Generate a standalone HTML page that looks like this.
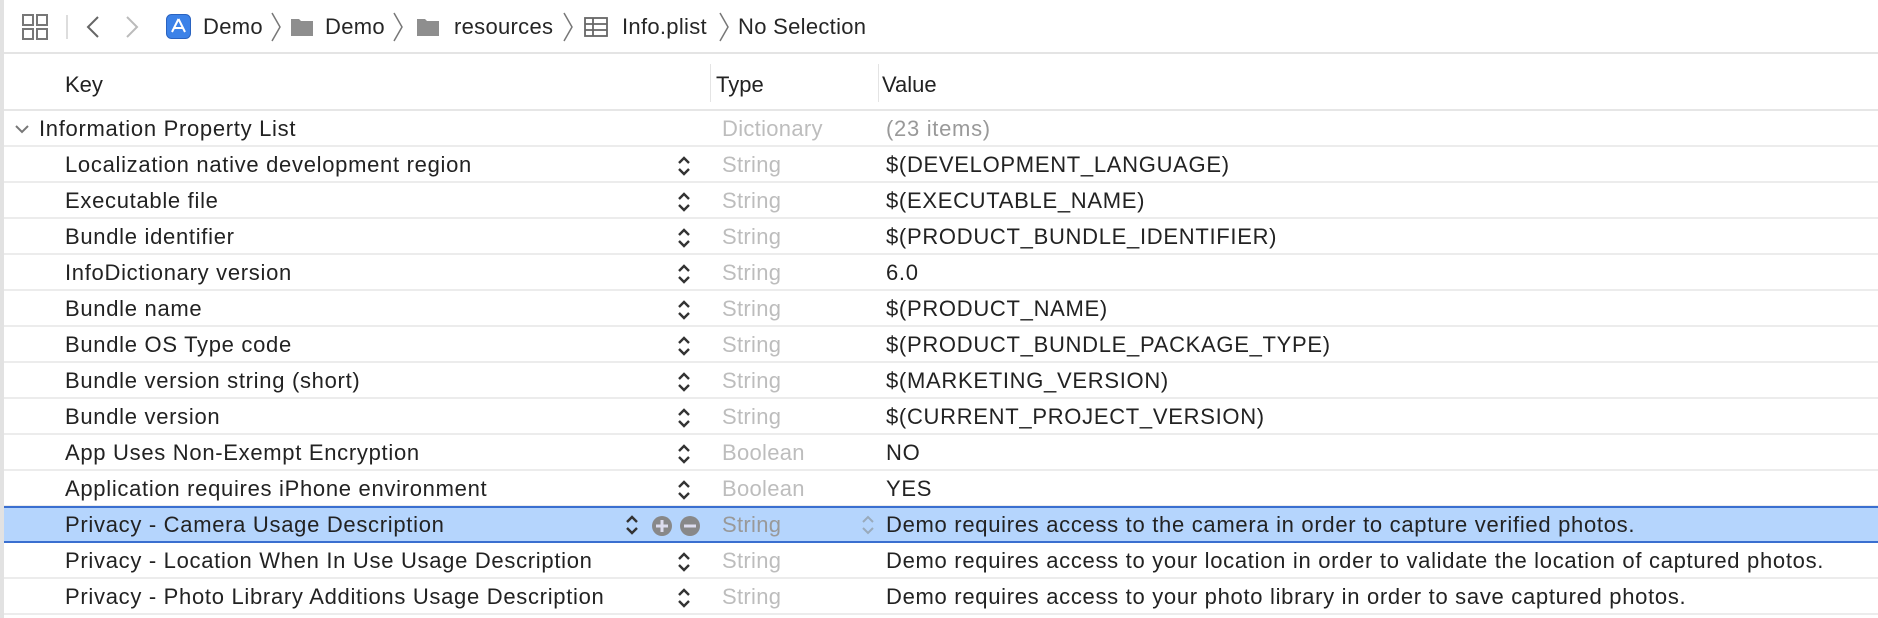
<!DOCTYPE html>
<html><head><meta charset="utf-8"><style>
*{margin:0;padding:0;box-sizing:border-box}
body{width:1878px;height:618px;background:#fff;font-family:"Liberation Sans",sans-serif;color:#222;position:relative;overflow:hidden}
.lb{position:absolute;left:0;top:0;width:4px;height:618px;background:#e2e2e2}
.tb{position:absolute;left:4px;top:0;right:0;height:54px;border-bottom:2px solid #e4e4e4}
.t{position:absolute;white-space:nowrap}
.bc{font-size:22px;top:14px;color:#262626;letter-spacing:0.3px}
.hd{position:absolute;left:4px;right:0;top:56px;height:55px;border-bottom:2px solid #e6e6e6}
.row{position:absolute;left:4px;right:0;height:36px;border-bottom:2px solid #ececec;font-size:22px;letter-spacing:0.7px;white-space:nowrap}
.row .k{position:absolute;left:61px;top:5px}
.row .ty{position:absolute;left:718px;top:5px;color:#bdbdbd;letter-spacing:0.3px}
.row .v{position:absolute;left:882px;top:5px}
.row svg.st{position:absolute;left:672px;top:8px}
.sel{background:#b5d5fd;border-top:2px solid #3a6fd0;border-bottom:2px solid #3a6fd0}
</style></head><body>
<div class="lb"></div>
<div class="tb"></div>
<svg style="position:absolute;left:22px;top:14px" width="27" height="26" viewBox="0 0 27 26" fill="none" stroke="#777" stroke-width="2"><rect x="1" y="1" width="10" height="10"/><rect x="15" y="1" width="10" height="10"/><rect x="1" y="15" width="10" height="10"/><rect x="15" y="15" width="10" height="10"/></svg>
<div style="position:absolute;left:66px;top:15px;width:2px;height:24px;background:#ddd"></div>
<svg style="position:absolute;left:84px;top:15px" width="18" height="24" viewBox="0 0 18 24" fill="none" stroke="#666" stroke-width="2"><path d="M14 2L4 12l10 10"/></svg>
<svg style="position:absolute;left:123px;top:15px" width="18" height="24" viewBox="0 0 18 24" fill="none" stroke="#bbb" stroke-width="2"><path d="M4 2l10 10-10 10"/></svg>
<svg style="position:absolute;left:166px;top:14px" width="25" height="25" viewBox="0 0 25 25"><rect x="0.5" y="0.5" width="24" height="24" rx="5" fill="#3c82e8" stroke="#2a63c0"/><path d="M12.5 5L6 18M12.5 5L19 18M8 14h9" stroke="#fff" stroke-width="2" fill="none"/></svg>
<div class="t bc" style="left:203px">Demo</div>
<svg style="position:absolute;left:270px;top:12px" width="12" height="30" viewBox="0 0 12 30" fill="none" stroke="#777" stroke-width="1.5"><path d="M2 1l8 14-8 14"/></svg>
<svg style="position:absolute;left:291px;top:17px" width="22" height="19" viewBox="0 0 22 19"><path d="M0 2h8l2 2h12v15H0z" fill="#8e8e8e"/></svg>
<div class="t bc" style="left:325px">Demo</div>
<svg style="position:absolute;left:392px;top:12px" width="12" height="30" viewBox="0 0 12 30" fill="none" stroke="#777" stroke-width="1.5"><path d="M2 1l8 14-8 14"/></svg>
<svg style="position:absolute;left:417px;top:17px" width="22" height="19" viewBox="0 0 22 19"><path d="M0 2h8l2 2h12v15H0z" fill="#8e8e8e"/></svg>
<div class="t bc" style="left:454px">resources</div>
<svg style="position:absolute;left:562px;top:12px" width="12" height="30" viewBox="0 0 12 30" fill="none" stroke="#777" stroke-width="1.5"><path d="M2 1l8 14-8 14"/></svg>
<svg style="position:absolute;left:584px;top:17px" width="24" height="20" viewBox="0 0 24 20" fill="none" stroke="#666" stroke-width="1.8"><rect x="1" y="1" width="22" height="18"/><path d="M1 7h22M1 13h22M9 1v18"/></svg>
<div class="t bc" style="left:622px">Info.plist</div>
<svg style="position:absolute;left:718px;top:12px" width="12" height="30" viewBox="0 0 12 30" fill="none" stroke="#777" stroke-width="1.5"><path d="M2 1l8 14-8 14"/></svg>
<div class="t bc" style="left:738px">No Selection</div>

<div class="hd">
<div class="t" style="left:61px;top:16px;font-size:22px">Key</div>
<div style="position:absolute;left:706px;top:8px;width:1px;height:38px;background:#e4e4e4"></div>
<div class="t" style="left:712px;top:16px;font-size:22px">Type</div>
<div style="position:absolute;left:874px;top:8px;width:1px;height:38px;background:#e4e4e4"></div>
<div class="t" style="left:878px;top:16px;font-size:22px">Value</div>
</div>

<div class="row" style="top:111px">
<svg style="position:absolute;left:10px;top:13px" width="16" height="10" viewBox="0 0 16 10" fill="none" stroke="#777" stroke-width="2"><path d="M2 2l6 6 6-6"/></svg>
<div class="k" style="left:35px">Information Property List</div><div class="ty">Dictionary</div><div class="v" style="color:#999">(23 items)</div></div>

<div class="row" style="top:147px"><div class="k">Localization native development region</div><svg class="st" width="16" height="22" viewBox="0 0 16 22" fill="none" stroke="#333" stroke-width="2.4"><path d="M3 8l5-5 5 5M3 14l5 5 5-5"/></svg><div class="ty">String</div><div class="v">$(DEVELOPMENT_LANGUAGE)</div></div>
<div class="row" style="top:183px"><div class="k">Executable file</div><svg class="st" width="16" height="22" viewBox="0 0 16 22" fill="none" stroke="#333" stroke-width="2.4"><path d="M3 8l5-5 5 5M3 14l5 5 5-5"/></svg><div class="ty">String</div><div class="v">$(EXECUTABLE_NAME)</div></div>
<div class="row" style="top:219px"><div class="k">Bundle identifier</div><svg class="st" width="16" height="22" viewBox="0 0 16 22" fill="none" stroke="#333" stroke-width="2.4"><path d="M3 8l5-5 5 5M3 14l5 5 5-5"/></svg><div class="ty">String</div><div class="v">$(PRODUCT_BUNDLE_IDENTIFIER)</div></div>
<div class="row" style="top:255px"><div class="k">InfoDictionary version</div><svg class="st" width="16" height="22" viewBox="0 0 16 22" fill="none" stroke="#333" stroke-width="2.4"><path d="M3 8l5-5 5 5M3 14l5 5 5-5"/></svg><div class="ty">String</div><div class="v">6.0</div></div>
<div class="row" style="top:291px"><div class="k">Bundle name</div><svg class="st" width="16" height="22" viewBox="0 0 16 22" fill="none" stroke="#333" stroke-width="2.4"><path d="M3 8l5-5 5 5M3 14l5 5 5-5"/></svg><div class="ty">String</div><div class="v">$(PRODUCT_NAME)</div></div>
<div class="row" style="top:327px"><div class="k">Bundle OS Type code</div><svg class="st" width="16" height="22" viewBox="0 0 16 22" fill="none" stroke="#333" stroke-width="2.4"><path d="M3 8l5-5 5 5M3 14l5 5 5-5"/></svg><div class="ty">String</div><div class="v">$(PRODUCT_BUNDLE_PACKAGE_TYPE)</div></div>
<div class="row" style="top:363px"><div class="k">Bundle version string (short)</div><svg class="st" width="16" height="22" viewBox="0 0 16 22" fill="none" stroke="#333" stroke-width="2.4"><path d="M3 8l5-5 5 5M3 14l5 5 5-5"/></svg><div class="ty">String</div><div class="v">$(MARKETING_VERSION)</div></div>
<div class="row" style="top:399px"><div class="k">Bundle version</div><svg class="st" width="16" height="22" viewBox="0 0 16 22" fill="none" stroke="#333" stroke-width="2.4"><path d="M3 8l5-5 5 5M3 14l5 5 5-5"/></svg><div class="ty">String</div><div class="v">$(CURRENT_PROJECT_VERSION)</div></div>
<div class="row" style="top:435px"><div class="k">App Uses Non-Exempt Encryption</div><svg class="st" width="16" height="22" viewBox="0 0 16 22" fill="none" stroke="#333" stroke-width="2.4"><path d="M3 8l5-5 5 5M3 14l5 5 5-5"/></svg><div class="ty">Boolean</div><div class="v">NO</div></div>
<div class="row" style="top:471px"><div class="k">Application requires iPhone environment</div><svg class="st" width="16" height="22" viewBox="0 0 16 22" fill="none" stroke="#333" stroke-width="2.4"><path d="M3 8l5-5 5 5M3 14l5 5 5-5"/></svg><div class="ty">Boolean</div><div class="v">YES</div></div>
<div class="row sel" style="top:506px;height:37px"><div class="k" style="top:4px">Privacy - Camera Usage Description</div>
<svg style="position:absolute;left:620px;top:6px" width="16" height="22" viewBox="0 0 16 22" fill="none" stroke="#333" stroke-width="2.4"><path d="M3 8l5-5 5 5M3 14l5 5 5-5"/></svg>
<svg style="position:absolute;left:647px;top:7px" width="22" height="22" viewBox="0 0 22 22"><circle cx="11" cy="11" r="10" fill="#888"/><path d="M11 5v12M5 11h12" stroke="#dde" stroke-width="3"/></svg>
<svg style="position:absolute;left:675px;top:7px" width="22" height="22" viewBox="0 0 22 22"><circle cx="11" cy="11" r="10" fill="#888"/><path d="M5 11h12" stroke="#dde" stroke-width="3"/></svg>
<div class="ty" style="top:4px;color:#999">String</div>
<svg style="position:absolute;left:856px;top:6px" width="16" height="22" viewBox="0 0 16 22" fill="none" stroke="#9ab" stroke-width="2"><path d="M3 8l5-5 5 5M3 14l5 5 5-5"/></svg>
<div class="v" style="top:4px">Demo requires access to the camera in order to capture verified photos.</div></div>
<div class="row" style="top:543px"><div class="k">Privacy - Location When In Use Usage Description</div><svg class="st" width="16" height="22" viewBox="0 0 16 22" fill="none" stroke="#333" stroke-width="2.4"><path d="M3 8l5-5 5 5M3 14l5 5 5-5"/></svg><div class="ty">String</div><div class="v">Demo requires access to your location in order to validate the location of captured photos.</div></div>
<div class="row" style="top:579px"><div class="k">Privacy - Photo Library Additions Usage Description</div><svg class="st" width="16" height="22" viewBox="0 0 16 22" fill="none" stroke="#333" stroke-width="2.4"><path d="M3 8l5-5 5 5M3 14l5 5 5-5"/></svg><div class="ty">String</div><div class="v">Demo requires access to your photo library in order to save captured photos.</div></div>
</body></html>
